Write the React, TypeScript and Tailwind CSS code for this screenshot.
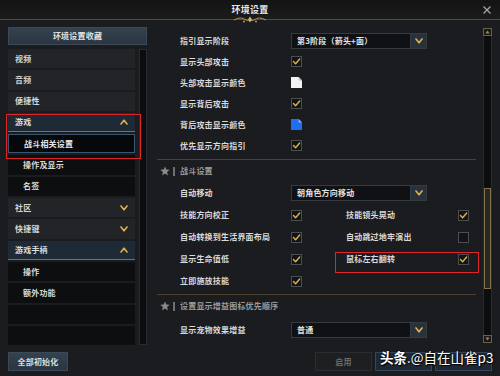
import React from 'react';

const GOLD = '#dcb34c';

function Chevron({ up }: { up?: boolean }) {
  return (
    <svg width="8" height="6" viewBox="0 0 8 6" className="block">
      <path
        d={up ? 'M1 5 L4 1.2 L7 5' : 'M1 1 L4 4.8 L7 1'}
        stroke={GOLD}
        strokeWidth="1.6"
        fill="none"
        strokeLinejoin="round"
        strokeLinecap="round"
      />
    </svg>
  );
}

function Checkbox({ checked }: { checked?: boolean }) {
  return (
    <div className="w-[11px] h-[11px] border border-[#4a4d52] bg-[#121417] flex items-center justify-center shrink-0">
      {checked && (
        <svg width="11" height="11" viewBox="0 0 11 11" className="block">
          <path d="M1.8 5.6 L4.4 8.2 L9.4 2.4" stroke={GOLD} strokeWidth="1.7" fill="none" strokeLinecap="round" strokeLinejoin="round" />
        </svg>
      )}
    </div>
  );
}

function Swatch({ color, fold }: { color: string; fold: string }) {
  return (
    <svg width="11" height="11" viewBox="0 0 11 11" className="block shrink-0">
      <path d="M0 0H7.6L11 3.4V11H0Z" fill={color} />
      <path d="M7.6 0V3.4H11Z" fill={fold} />
    </svg>
  );
}

function Dropdown({ text }: { text: string }) {
  return (
    <div className="flex h-[16px] w-[136px] border border-[#353a41] bg-[#0f1114]">
      <div className="flex-1 flex items-center pl-[5px] text-[#e2e2e2]">{text}</div>
      <div className="w-[16px] bg-[#28323d] border-l border-[#353a41] flex items-center justify-center">
        <Chevron />
      </div>
    </div>
  );
}

function Row({ label, children, h = 'h-[21px]' }: { label: string; children?: React.ReactNode; h?: string }) {
  return (
    <div className={`flex items-center ${h}`}>
      <div className="w-[134px] pl-[23px] text-[#d9d9d9]">{label}</div>
      {children}
    </div>
  );
}

function PairRow({ a, ac, b, bc }: { a: string; ac: boolean; b?: string; bc?: boolean }) {
  return (
    <div className="flex items-center h-[22px]">
      <div className="w-[134px] pl-[23px] text-[#d9d9d9]">{a}</div>
      <Checkbox checked={ac} />
      {b !== undefined && (
        <>
          <div className="w-[156px] pl-[44px] text-[#d9d9d9]">{b}</div>
          <Checkbox checked={bc} />
        </>
      )}
    </div>
  );
}

function Section({ title }: { title: string }) {
  return (
    <div>
      <div className="h-px bg-[#4b412c]" />
      <div className="flex items-center h-[22px] pl-[3px] text-[#9b9b9b]">
        <svg width="10" height="10" viewBox="0 0 10 10" className="block">
          <path d="M5 0.4 L6.3 3.6 L9.7 3.8 L7.1 6 L7.9 9.4 L5 7.6 L2.1 9.4 L2.9 6 L0.3 3.8 L3.7 3.6Z" fill="#8a8a8a" />
        </svg>
        <div className="w-[2px] h-[9px] bg-[#6f6f6f] ml-[3px] mr-[5px]" />
        <span>{title}</span>
      </div>
    </div>
  );
}

type Item = { label: string; kind: 'top' | 'sub' | 'open' | 'active' | 'empty'; chev?: 'up' | 'down' };

const items: Item[] = [
  { label: '视频', kind: 'top' },
  { label: '音频', kind: 'top' },
  { label: '便捷性', kind: 'top' },
  { label: '游戏', kind: 'open', chev: 'up' },
  { label: '战斗相关设置', kind: 'active' },
  { label: '操作及显示', kind: 'sub' },
  { label: '名签', kind: 'sub' },
  { label: '社区', kind: 'top', chev: 'down' },
  { label: '快捷键', kind: 'top', chev: 'down' },
  { label: '游戏手柄', kind: 'open', chev: 'up' },
  { label: '操作', kind: 'sub' },
  { label: '额外功能', kind: 'sub' },
  { label: '', kind: 'empty' },
  { label: '', kind: 'empty' },
];

function ListItem({ item }: { item: Item }) {
  const base = 'h-[19.3px] flex items-center justify-between pr-[7px]';
  const styles: Record<Item['kind'], string> = {
    top: 'bg-[#222427] pl-[7px] text-[#d6d6d6]',
    open: 'bg-[#1f2a37] border-b border-[#4f79a6] pl-[7px] text-[#dcdcdc]',
    active: 'bg-[#07080a] border border-[#3b5670] pl-[15px] text-[#e6e6e6]',
    sub: 'bg-[#0d0e10] pl-[15px] text-[#d6d6d6]',
    empty: 'bg-[#0d0e10]',
  };
  return (
    <div className={`${base} ${styles[item.kind]}`}>
      <span>{item.label}</span>
      {item.chev && <Chevron up={item.chev === 'up'} />}
    </div>
  );
}

export default function App() {
  return (
    <div className="relative w-[500px] h-[376px] overflow-hidden bg-[#1b1c1f] text-[8px] font-bold tracking-[0.2px] leading-none font-['Noto_Sans_CJK_SC','Noto_Sans',sans-serif]">
      {/* title bar */}
      <div className="relative h-[20px] bg-gradient-to-b from-[#121315] to-[#1d1c1b] border-b border-[#5a4b31] flex items-center justify-center">
        <span className="text-[9px] text-[#e8e8e8]">环境设置</span>
        <svg width="10" height="10" viewBox="0 0 10 10" className="absolute right-[8px] top-[5px]">
          <path d="M1.5 1.5 L8.5 8.5 M8.5 1.5 L1.5 8.5" stroke="#a8a8a8" strokeWidth="1.2" />
        </svg>
        <svg width="34" height="10" viewBox="0 0 34 10" className="absolute left-[233px] top-[15px]">
          <path d="M1 5 Q8 1 13 5 Q15 6.5 17 4 Q19 6.5 21 5 Q26 1 33 5" stroke="#b39558" strokeWidth="1" fill="none" />
          <path d="M17 1.5 L19 4.5 L17 7.5 L15 4.5Z" fill="#d4b26a" />
          <circle cx="11" cy="6.5" r="1" fill="#b39558" />
          <circle cx="23" cy="6.5" r="1" fill="#b39558" />
        </svg>
      </div>

      {/* body */}
      <div className="flex h-[328px] pl-[8px]">
        {/* left column */}
        <div className="w-[139px] pt-[7px]">
          <div className="h-[18px] bg-gradient-to-b from-[#34424f] to-[#2a3642] border border-[#3c4a58] flex items-center justify-center text-[#e2e2e2]">
            环境设置收藏
          </div>
          <div className="flex gap-[4px] mt-[4px]">
            <div className="w-[127px] flex flex-col gap-[2px]">
              {items.map((it, i) => (
                <ListItem key={i} item={it} />
              ))}
            </div>
            <div className="w-[8px] h-[296px] bg-[#0b0c0e] border border-[#2a2b2e]" />
          </div>
        </div>

        {/* right content */}
        <div className="w-[319px] ml-[10px] pt-[10px]">
          <Row label="指引显示阶段">
            <Dropdown text="第3阶段（箭头+面）" />
          </Row>
          <Row label="显示头部攻击">
            <Checkbox checked />
          </Row>
          <Row label="头部攻击显示颜色">
            <Swatch color="#f2f2f2" fold="#bdbdbd" />
          </Row>
          <Row label="显示背后攻击">
            <Checkbox checked />
          </Row>
          <Row label="背后攻击显示颜色">
            <Swatch color="#1f6ef2" fold="#8fb4f5" />
          </Row>
          <Row label="优先显示方向指引">
            <Checkbox checked />
          </Row>

          <div className="mt-[3px]">
            <Section title="战斗设置" />
          </div>
          <Row label="自动移动" h="h-[22px]">
            <Dropdown text="朝角色方向移动" />
          </Row>
          <PairRow a="技能方向校正" ac b="技能镜头晃动" bc />
          <PairRow a="自动转换到生活界面布局" ac b="自动跳过地牢演出" bc={false} />
          <PairRow a="显示生命值低" ac b="鼠标左右翻转" bc />
          <PairRow a="立即施放技能" ac />

          <div className="mt-[2px]">
            <Section title="设置显示增益图标优先顺序" />
          </div>
          <div className="mt-[2px]">
            <Row label="显示宠物效果增益" h="h-[22px]">
              <Dropdown text="普通" />
            </Row>
          </div>
        </div>

        {/* right scrollbar */}
        <div className="w-[9px] ml-[7px] pt-[8px] flex flex-col">
          <div className="h-[8px] border border-[#6e5f40] bg-[#1a1915] flex items-center justify-center">
            <svg width="5" height="4" viewBox="0 0 5 4"><path d="M2.5 0.5 L4.5 3.5 H0.5Z" fill="#9c8a62" /></svg>
          </div>
          <div className="h-[299px] bg-[#0c0d0f] border-x border-[#2b2b2b] pt-[152px]">
            <div className="h-[101px] border border-[#85724c] bg-[#2a2823]" />
          </div>
          <div className="h-[8px] border border-[#6e5f40] bg-[#1a1915] flex items-center justify-center">
            <svg width="5" height="4" viewBox="0 0 5 4"><path d="M2.5 3.5 L4.5 0.5 H0.5Z" fill="#9c8a62" /></svg>
          </div>
        </div>
      </div>

      {/* bottom bar */}
      <div className="flex items-start h-[28px] pt-[4px] pl-[8px]">
        <div className="w-[60px] h-[19px] bg-gradient-to-b from-[#34424f] to-[#2a3642] border border-[#3c4a58] flex items-center justify-center text-[#dedede]">
          全部初始化
        </div>
        <div className="ml-[247px] w-[57px] h-[19px] bg-[#1e1f21] border border-[#2c2d30] flex items-center justify-center text-[#6a6a6a]">
          启用
        </div>
        <div className="ml-[3px] w-[57px] h-[19px] bg-[#1f2834] border border-[#34465a]" />
        <div className="ml-[3px] w-[57px] h-[19px] bg-[#1f2834] border border-[#34465a]" />
      </div>

      {/* annotation boxes */}
      <div className="absolute left-[6px] top-[114px] w-[135px] h-[45px] border-[1.5px] border-[#e0242a]" />
      <div className="absolute left-[335px] top-[252px] w-[144px] h-[21px] border-[1.5px] border-[#e0242a]" />

      {/* watermark */}
      <div className="absolute left-[380px] top-[351px] text-[13.5px] text-white tracking-normal [text-shadow:0_0_2px_#000,1px_1px_1px_#000]">
        <span className="font-bold">头条</span>
        <span className="font-normal">.@自在山雀p3</span>
      </div>
    </div>
  );
}
